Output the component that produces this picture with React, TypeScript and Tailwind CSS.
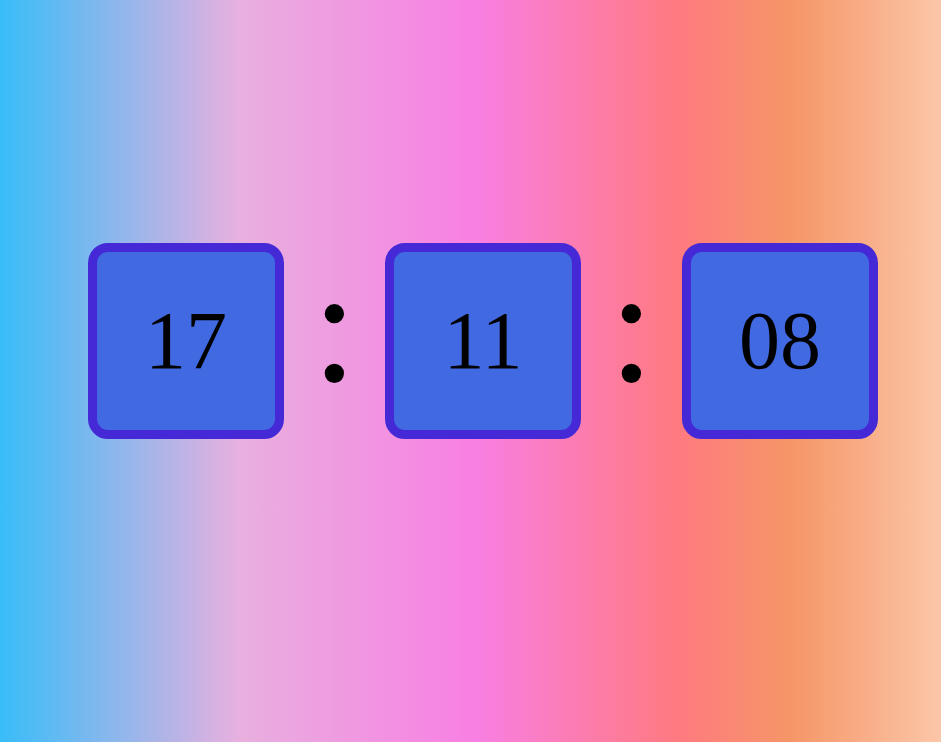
const units = ["17", "11", "08"]

const Digit = ({ value }: { value: string }) => (
    <div className="flex h-[196px] w-[196px] shrink-0 items-center justify-center rounded-[20px] border-[9px] border-[#4529d6] bg-[#4169e1]">
        <span className="font-['Liberation_Serif',serif] text-[82px] leading-none text-black">{value}</span>
    </div>
)

const Colon = () => (
    <div className="flex w-[101px] shrink-0 items-center justify-center pb-[30px]">
        <span className="font-['Liberation_Serif',serif] text-[164px] leading-none text-black">:</span>
    </div>
)

export default function App() {
    return (
        <div className="min-h-screen w-full bg-[linear-gradient(90deg,#38bdf8_0%,#e8b0df_25.5%,#f87fe3_50.5%,#ff7a80_72%,#f59667_84%,#fcc6a8_100%)] pl-[88px] pt-[243px]">
            <div className="flex items-stretch">
                {units.map((u, i) => (
                    <div key={i} className="flex items-stretch">
                        {i > 0 && <Colon />}
                        <Digit value={u} />
                    </div>
                ))}
            </div>
        </div>
    )
}
